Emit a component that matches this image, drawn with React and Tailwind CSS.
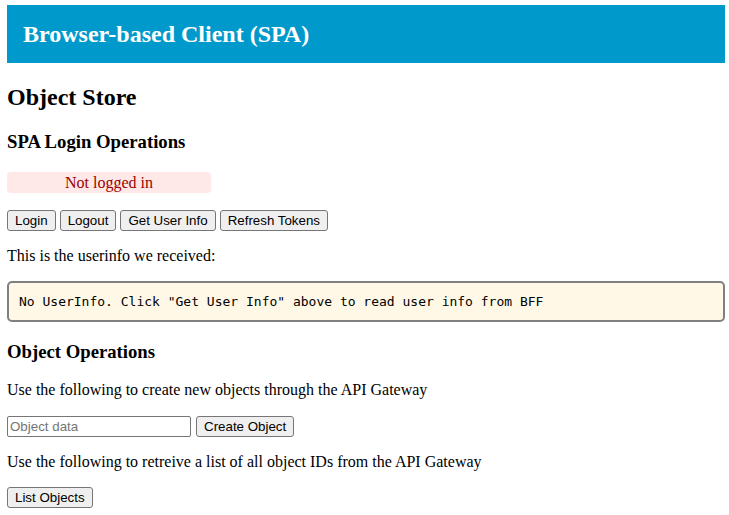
import React from "react";

const btn =
  "h-[21px] px-[7px] bg-[#efefef] border border-[#767676] rounded-[3px] text-[13.33px] leading-[15px] text-black font-['Liberation_Sans',Arial,sans-serif]";

export default function App() {
  return (
    <div className="pl-[7px] pr-[4px] pt-[5px] pb-2 bg-white text-black font-['Liberation_Serif','Times_New_Roman',serif] text-[16px]">
      <header className="h-[58px] bg-[#0099cc] px-4 flex items-center">
        <h1 className="text-white text-[24px] font-bold leading-[28px]">
          Browser-based Client (SPA)
        </h1>
      </header>

      <h2 className="mt-[21px] text-[24px] font-bold leading-[27px]">Object Store</h2>

      <h3 className="mt-[20px] text-[18.72px] font-bold leading-[21px]">SPA Login Operations</h3>

      <div className="mt-[20px] w-[204px] h-[21px] bg-[#ffe8e8] rounded-[4px] text-[#990000] text-center leading-[21px]">
        Not logged in
      </div>

      <div className="mt-[17px] flex gap-[4px]">
        <button className={btn}>Login</button>
        <button className={btn}>Logout</button>
        <button className={btn}>Get User Info</button>
        <button className={btn}>Refresh Tokens</button>
      </div>

      <p className="mt-[16px] leading-[18px]">This is the userinfo we received:</p>

      <div className="mt-[16px] h-[41px] border-2 border-[#808080] rounded-[5px] bg-[#fff8e6] px-[10px] flex items-center">
        <pre className="font-['DejaVu_Sans_Mono',monospace] text-[13px] leading-[15px]">
          No UserInfo. Click "Get User Info" above to read user info from BFF
        </pre>
      </div>

      <h3 className="mt-[19px] text-[18.72px] font-bold leading-[21px]">Object Operations</h3>

      <p className="mt-[19px] leading-[18px]">
        Use the following to create new objects through the API Gateway
      </p>

      <div className="mt-[17px] flex gap-[5px] items-start">
        <input
          type="text"
          placeholder="Object data"
          className="w-[184px] h-[21px] border border-[#767676] rounded-[2px] px-[2px] text-[13.33px] font-['Liberation_Sans',Arial,sans-serif] placeholder:text-[#757575] bg-white"
        />
        <button className={btn}>Create Object</button>
      </div>

      <p className="mt-[16px] leading-[18px]">
        Use the following to retreive a list of all object IDs from the API Gateway
      </p>

      <div className="mt-[16px] flex">
        <button className={btn}>List Objects</button>
      </div>
    </div>
  );
}
